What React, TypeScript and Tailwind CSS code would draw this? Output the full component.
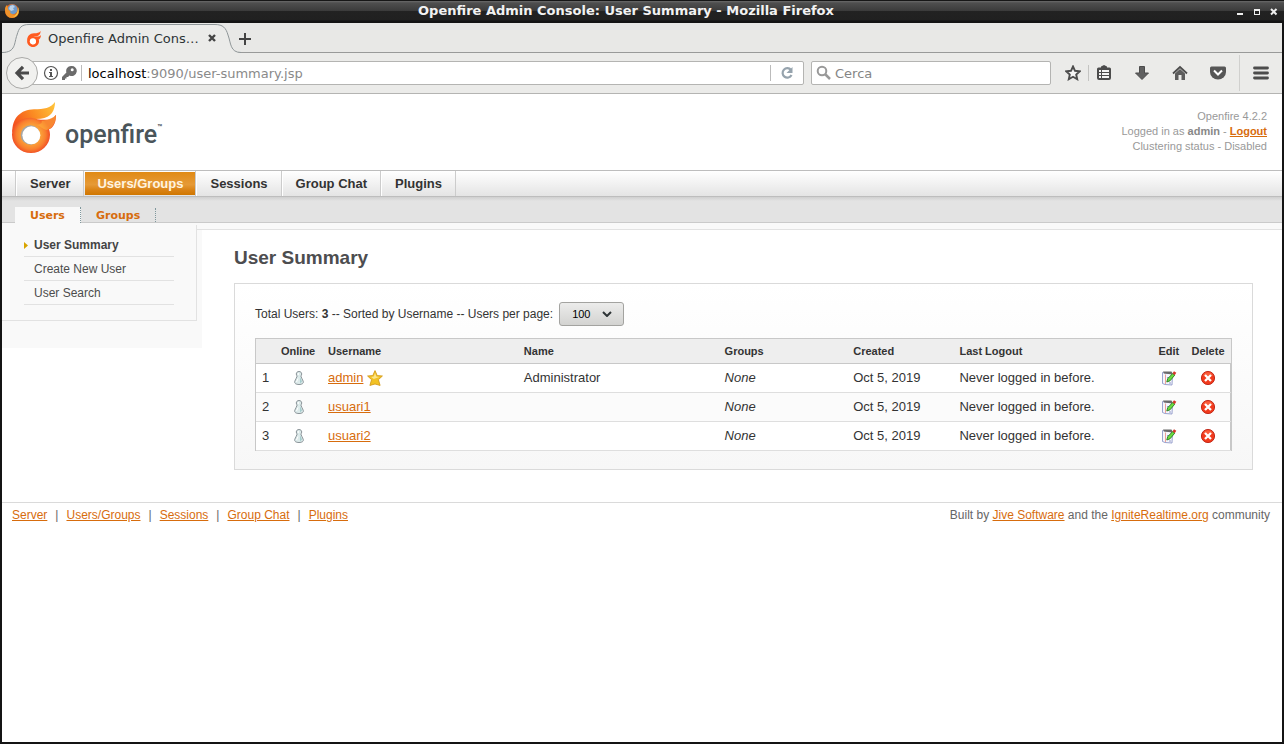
import React from "react";

const navItems = ["Server", "Users/Groups", "Sessions", "Group Chat", "Plugins"];

const users = [
  { id: 1, username: "admin", name: "Administrator", isAdmin: true },
  { id: 2, username: "usuari1", name: "", isAdmin: false },
  { id: 3, username: "usuari2", name: "", isAdmin: false },
];

const linkClass = "text-[#d76c0d] underline";

function FlameLogo({ className, flat = false }: { className: string; flat?: boolean }) {
  const id = flat ? "flat" : "full";
  const body = flat ? "#ff5a1f" : `url(#${id}-ring)`;
  const flame = flat ? "#ff5a1f" : `url(#${id}-flame)`;
  return (
    <svg viewBox="0 0 132 153" className={className} aria-hidden="true">
      <defs>
        <radialGradient id={`${id}-ring`} cx="57" cy="98" r="58" gradientUnits="userSpaceOnUse">
          <stop offset="0.45" stopColor="#fba63a" />
          <stop offset="0.75" stopColor="#f9812f" />
          <stop offset="1" stopColor="#f04a23" />
        </radialGradient>
        <linearGradient id={`${id}-flame`} x1="0" y1="0.6" x2="1" y2="0.2">
          <stop offset="0" stopColor="#f4511e" />
          <stop offset="0.5" stopColor="#fb8c23" />
          <stop offset="1" stopColor="#ffc038" />
        </linearGradient>
      </defs>
      <path d="M1 92C0 48 26 23 66 22C96 22 116 18 129 0C129 24 119 47 86 50C42 50 14 60 1 92Z" fill={flame} />
      <path d="M0 98C0 66 25 47 57 47C84 54 116 60 132 38C133 62 122 78 111 82C113 88 114 93 114 98C114 129 88 153 57 153C26 153 0 129 0 98Z" fill={body} />
      {!flat && <path d="M88 56C108 54 122 49 132 39C132 62 121 80 104 84C94 82 89 74 72 68C86 68 92 62 88 56Z" fill="#fdb03a" opacity="0.6" />}
      <circle cx="55" cy="99" r="29" fill={flat ? "#fff" : "#a5a5a5"} />
      <circle cx="58" cy="100" r="27" fill="#fff" />
    </svg>
  );
}

function FirefoxIcon() {
  return (
    <svg viewBox="0 0 16 16" className="size-4" aria-hidden="true">
      <circle cx="8" cy="8" r="7" fill="#e0641a" />
      <circle cx="8.5" cy="6.5" r="5" fill="#6f9bcb" />
      <path d="M6 3l3-1 2 2-2 1 1 2-3 1-2-2z" fill="#bcd3ea" />
      <path d="M1 6C1 12 4 15 8 15C13 15 15 11 15 7C14 11 11 12.500 8 11C6 10 5 9 7 8C4 8 4 5 3 2C2 3 1 4 1 6Z" fill="#f0932b" />
      <path d="M14 4C16 9 13 14 9 14C13 12 14 8 14 4Z" fill="#f8d24a" />
    </svg>
  );
}

function TitleBar() {
  return (
    <header className="grid h-[23px] grid-cols-[32px_1fr_64px] items-center border-t border-[#161616] bg-[linear-gradient(to_bottom,#6a6a6a_0,#4e4e4e_2px,#3a3a3a_10px,#222_10px,#202020_19px,#141414_20px)] px-1 pb-[2px] text-[#f2f2f2]">
      <FirefoxIcon />
      <h1 className="text-center font-['DejaVu_Sans',sans-serif] text-[13px] leading-5 font-bold whitespace-nowrap">
        Openfire Admin Console: User Summary - Mozilla Firefox
      </h1>
      <div className="flex justify-end gap-2 pr-[2px]">
        <button aria-label="Minimize" className="flex size-[9px]">
          <svg viewBox="0 0 9 9" className="size-[9px]"><path d="M2 6h6v2H2z" fill="#eee" /></svg>
        </button>
        <button aria-label="Maximize" className="flex size-[9px]">
          <svg viewBox="0 0 9 9" className="size-[9px]"><path d="M2 2h6v6H2zM3 4v3h4V4z" fill="#eee" fillRule="evenodd" /></svg>
        </button>
        <button aria-label="Close" className="flex size-[9px]">
          <svg viewBox="0 0 9 9" className="size-[9px]"><path d="M2 2l5.500 5.500M7.500 2L2 7.500" stroke="#eee" strokeWidth="2" /></svg>
        </button>
      </div>
    </header>
  );
}

function TabStrip() {
  return (
    <div className="flex h-[30px] items-start border-b border-[#999a99] bg-[#e8e8e6] text-[#2e3436]">
      <div className="relative flex h-[30px] w-[236px] items-center pr-[22px] pl-6">
        <svg viewBox="0 0 240 30" className="absolute top-0 left-0 h-[30px] w-[240px]" aria-hidden="true">
          <path d="M0 29.500C14 29.500 12 20 15 12C17 5 19 1.500 27 1.500H213C221 1.500 224 5 226 12C229 20 228 29.500 239 29.500V31H0Z" fill="#ebebe9" />
          <path d="M0 29.500C14 29.500 12 20 15 12C17 5 19 1.500 27 1.500H213C221 1.500 224 5 226 12C229 20 228 29.500 239 29.500" fill="none" stroke="#8f9698" />
        </svg>
        <FlameLogo flat className="relative mt-[2px] size-4" />
        <span className="relative ml-[6px] flex-1 pt-px text-[13px] whitespace-nowrap">Openfire Admin Cons…</span>
        <button aria-label="Close tab" className="relative flex">
          <svg viewBox="0 0 8 8" className="size-2"><path d="M1 1l6 6M7 1L1 7" stroke="#444" strokeWidth="2.400" /></svg>
        </button>
      </div>
      <button aria-label="New tab" className="relative flex h-[30px] items-center pt-[2px]">
        <svg viewBox="0 0 14 14" className="size-[14px]"><path d="M7 1v12M1 7h12" stroke="#444" strokeWidth="2" /></svg>
      </button>
    </div>
  );
}

function Toolbar() {
  return (
    <div className="flex h-[41px] items-center border-b border-[#b4b4b2] bg-[#ebebe9] pl-1 text-[13px]">
      <button aria-label="Back" className="z-10 flex size-8 shrink-0 items-center justify-center rounded-full border border-[#a9a9a7] bg-[#f1f1ef]">
        <svg viewBox="0 0 16 16" className="size-4"><path d="M9 1.800L3 8l6 6.200M3.500 8H15" fill="none" stroke="#4a4a4a" strokeWidth="3.200" /></svg>
      </button>
      <div className="-ml-2 flex h-6 flex-1 items-center rounded-r-[2px] border border-[#b4b4b2] bg-white pl-3">
        <svg viewBox="0 0 16 16" className="size-4 shrink-0" aria-hidden="true">
          <circle cx="8" cy="8" r="6.500" fill="none" stroke="#555" strokeWidth="1.200" />
          <path d="M7 4h2v2H7zM6 7h3v4h1v1H6v-1h1V8H6z" fill="#555" />
        </svg>
        <svg viewBox="0 0 16 16" className="ml-[2px] size-4 shrink-0" aria-hidden="true">
          <path d="M10 1a5 5 0 0 0-4.600 6.500L1 12v3h3v-1.500h1.500V12H7l1.500-1.600A5 5 0 1 0 10 1zM11.200 3.300a1.500 1.500 0 1 1 0 3a1.500 1.500 0 0 1 0-3z" fill="#6b6b6b" />
        </svg>
        <span className="ml-1 h-4 w-px bg-[#bbb]" />
        <label className="relative ml-[6px] flex h-full flex-1 items-center pt-px">
          <span aria-hidden="true" className="text-[#8a8a8a]"><span className="text-black">localhost</span>:9090/user-summary.jsp</span>
          <input aria-label="Address" className="absolute inset-0 w-full bg-transparent outline-none" />
        </label>
        <button aria-label="Reload" className="flex h-4 items-center border-l border-[#bbb] px-2">
          <svg viewBox="0 0 16 16" className="size-4"><path d="M12 5A4.700 4.700 0 1 0 12.500 10" fill="none" stroke="#96a3ad" strokeWidth="2.200" /><path d="M13.500 2v6h-6z" fill="#96a3ad" /></svg>
        </button>
      </div>
      <label className="ml-[7px] flex h-6 w-60 items-center rounded-[2px] border border-[#b4b4b2] bg-white px-1">
        <svg viewBox="0 0 16 16" className="size-4 shrink-0" aria-hidden="true"><circle cx="6" cy="6" r="4.300" fill="none" stroke="#999" strokeWidth="2" /><path d="M9 9l5 5" stroke="#999" strokeWidth="2.500" /></svg>
        <input aria-label="Search" placeholder="Cerca" className="ml-[3px] w-full min-w-0 pt-px outline-none placeholder:text-[#858585]" />
      </label>
      <div className="flex items-center pl-[14px]">
        <button aria-label="Bookmark" className="flex">
          <svg viewBox="0 0 16 16" className="size-4"><path d="M8 1.500l2 4.300 4.700.5-3.500 3.200 1 4.700L8 11.800l-4.200 2.400 1-4.700L1.300 6.300 6 5.800z" fill="#f5f5f5" stroke="#4c4c4c" strokeWidth="1.900" /></svg>
        </button>
        <span className="ml-[7px] h-4 w-px bg-[#c4c4c2]" />
        <button aria-label="Bookmarks list" className="ml-[7px] flex">
          <svg viewBox="0 0 16 16" className="size-4"><path d="M1 4q0-1.500 1.500-1.500H5V1.500L8 0l3 1.500v1h2.500Q15 2.500 15 4v9q0 2-2 2H3q-2 0-2-2z" fill="#4c4c4c" /><path d="M3 5h2v2H3zM6 5h7v2H6zM3 8h2v2H3zM6 8h7v2H6zM3 11h2v2H3zM6 11h7v2H6z" fill="#f4f4f4" /></svg>
        </button>
        <button aria-label="Downloads" className="ml-[22px] flex">
          <svg viewBox="0 0 16 16" className="size-4"><path d="M5.500 1.500h5V8H14.500L8 14.500 1.500 8H5.500z" fill="#606060" stroke="#4c4c4c" /></svg>
        </button>
        <button aria-label="Home" className="ml-[22px] flex">
          <svg viewBox="0 0 16 16" className="size-4"><path d="M3 8.500l5-4.500 5 4.500V15H9.500v-5h-3v5H3z" fill="#5c5c5c" /><path d="M1 8.500L8 2l7 6.500" fill="none" stroke="#4c4c4c" strokeWidth="1.800" /></svg>
        </button>
        <button aria-label="Pocket" className="ml-[22px] flex">
          <svg viewBox="0 0 16 16" className="size-4"><path d="M0 3q0-1.500 1.500-1.500h13Q16 1.500 16 3v4a8 7.500 0 0 1-16 0z" fill="#565656" /><path d="M4 5.500l4 4 4-4" fill="none" stroke="#fff" strokeWidth="2" /></svg>
        </button>
        <span className="ml-[13px] h-9 w-px bg-[#d0d0ce]" />
        <button aria-label="Menu" className="mr-[13px] ml-[13px] flex">
          <svg viewBox="0 0 16 16" className="size-4"><path d="M1.500 3h13M1.500 8h13M1.500 13h13" stroke="#4c4c4c" strokeWidth="2.800" strokeLinecap="round" /></svg>
        </button>
      </div>
    </div>
  );
}

function SiteHeader() {
  return (
    <>
      <div className="flex h-[76px] items-start justify-between pt-2 pr-[15px] pl-[10px]">
        <a href="#home" aria-label="Openfire" className="flex items-start">
          <FlameLogo className="h-[51px] w-11" />
          <span className="mt-[17px] ml-[9px] font-['Roboto',sans-serif] text-[25px] leading-8 font-medium text-[#4a555a]">openfire</span>
          <span className="mt-5 font-['Roboto',sans-serif] text-[8px] font-bold text-[#4a555a]">™</span>
        </a>
        <div className="pt-[7px] text-right text-[11px] leading-[15px] text-[#999]">
          <p>Openfire 4.2.2</p>
          <p>Logged in as <b className="text-[#888]">admin</b> - <a href="#logout" className="font-bold text-[#d76c0d] underline">Logout</a></p>
          <p>Clustering status - Disabled</p>
        </div>
      </div>
      <nav className="flex h-[27px] border-y border-[#bdbdbd] bg-linear-to-b from-white to-[#e4e4e4] pl-[13px] text-[13px] leading-[26px] font-bold text-[#333]">
        {navItems.map((item) => (
          <a key={item} href={`#${item}`} className="flex border-l border-[#ccc]">
            <span
              className={
                item === "Users/Groups"
                  ? "my-px ml-px bg-[linear-gradient(#e08a15,#e69a37_55%,#d98112_80%,#cf7600)] px-3 leading-6 text-[#fff4e0]"
                  : "h-[25px] border-l border-white px-[13px]"
              }
            >
              {item}
            </span>
          </a>
        ))}
        <span className="border-l border-[#ccc]" />
      </nav>
      <nav className="flex h-[26px] items-end border-b border-[#cacaca] bg-[linear-gradient(#cfcfcf,#e3e3e3_4px)] pl-[13px] font-['DejaVu_Sans',sans-serif] text-[11px] font-bold text-[#d76c0d]">
        <a href="#users" className="-mb-px h-4 border-r border-dotted border-[#7f979c] bg-[#f9f9f9] px-[15px] leading-[18px]">Users</a>
        <a href="#groups" className="h-[14px] border-r border-dotted border-[#7f979c] px-[15px] leading-4">Groups</a>
      </nav>
    </>
  );
}

function Sidebar() {
  const items = ["User Summary", "Create New User", "User Search"];
  return (
    <aside className="h-[118px] w-[200px] shrink-0 bg-[#f9f9f9]">
      <ul className="w-[195px] border-r border-b border-[#e2e2e2] px-[22px] pt-[3px] pb-[15px] text-xs text-[#4c4c4c]">
        {items.map((item, index) => (
          <li key={item} className="flex h-6 items-center border-b border-[#e2e2e2]">
            <svg viewBox="0 0 4 7" className="mt-[2px] mr-[6px] h-[7px] w-1" aria-hidden="true">
              {index === 0 && <path d="M0 0l4 3.500L0 7z" fill="#d8a400" />}
            </svg>
            <a href={`#${item}`} className={index === 0 ? "font-bold text-[#444]" : ""}>{item}</a>
          </li>
        ))}
      </ul>
    </aside>
  );
}

function PawnIcon() {
  return (
    <svg viewBox="0 0 16 16" className="mx-auto size-4" aria-label="Offline" role="img">
      <path d="M8 1.500c1.700 0 2.700 1.100 2.700 2.500 0 1-.4 1.500-.9 2 .8 2 1.600 3.500 2.400 5.200C13 13.300 11 14.500 8 14.500s-5-1.200-4.200-3.300C4.600 9.500 5.400 8 6.200 6c-.5-.5-.9-1-.9-2C5.300 2.600 6.300 1.500 8 1.500z" fill="#dceaea" stroke="#8b9499" />
      <path d="M9 7l2 4.500L9 13.500z" fill="#a5cccd" />
      <path d="M7.300 3v2M7 8.500l-1.500 3.500" stroke="#fff" />
    </svg>
  );
}

function StarIcon() {
  return (
    <svg viewBox="0 0 16 16" className="size-4" aria-label="Administrator" role="img">
      <path d="M8 .6l2.200 5 5.200.4-4 3.700 1.700 5.700-5.100-1.400-5.100 1.400 1.700-5.700L.6 6l5.200-.4z" fill="#f2c224" stroke="#d59b1c" strokeWidth="0.900" strokeLinejoin="round" />
      <path d="M8 3l1.300 3.500 3 .5-5.500 2-2.700-2 2.700-.5z" fill="#fbe58a" />
    </svg>
  );
}

function EditIcon() {
  return (
    <svg viewBox="0 0 16 16" className="size-4" aria-hidden="true">
      <path d="M1.500 2.500l10 1.500-.5 11-7-.5-2.500-1z" fill="#f5f6fc" stroke="#8f97c8" strokeWidth="0.900" />
      <path d="M2 1.500h8.500l1.500 3-9-1z" fill="#6a6a6a" />
      <path d="M4.500 4.500v9.500" stroke="#ee8c7c" strokeWidth="0.800" />
      <path d="M6 7.500h2M8 13h2" stroke="#7c86be" strokeWidth="0.800" />
      <path d="M11.700 3.500l2 1.700-4.700 5.600-3.200 1.200.9-3.300z" fill="#6bdc3f" stroke="#267a1d" strokeWidth="0.900" />
      <path d="M11.500 3.300l1.500-2.100 2.300 1.600-1.600 2.500z" fill="#d6372a" />
    </svg>
  );
}

function DeleteIcon() {
  return (
    <svg viewBox="0 0 16 16" className="size-4" aria-hidden="true">
      <circle cx="8" cy="8" r="6.600" fill="#f13a1c" stroke="#bd2011" strokeWidth="0.900" />
      <path d="M3 5.500a5.400 5.400 0 0 1 10 0q-5 2-10 0z" fill="#ff7a55" opacity="0.550" />
      <path d="M5 5l6 6M11 5l-6 6" stroke="#fff" strokeWidth="2.300" />
    </svg>
  );
}

function UserTable() {
  return (
    <div className="mt-3 border border-b-0 border-[#c8c8c8]">
      <table className="w-full table-fixed text-left text-[13px] text-[#333] [&_td]:px-[6px] [&_th]:px-[6px]">
        <colgroup>
          <col className="w-[19px]" />
          <col className="w-[47px]" />
          <col className="w-[20.1%]" />
          <col className="w-[20.6%]" />
          <col className="w-[13.2%]" />
          <col className="w-[10.9%]" />
          <col />
          <col className="w-[33px]" />
          <col className="w-[45px]" />
        </colgroup>
        <thead className="bg-[#eee] text-[11px] whitespace-nowrap">
          <tr className="h-6 border-b border-[#c8c8c8]">
            <th aria-label="Number" />
            <th>Online</th>
            <th>Username</th>
            <th>Name</th>
            <th>Groups</th>
            <th>Created</th>
            <th>Last Logout</th>
            <th>Edit</th>
            <th>Delete</th>
          </tr>
        </thead>
        <tbody>
          {users.map((user) => (
            <tr key={user.id} className="h-[29px] border-r border-b border-r-[#c8c8c8] border-b-[#dedede] bg-white even:bg-[#fbfbfb]">
              <td>{user.id}</td>
              <td><PawnIcon /></td>
              <td>
                <span className="flex items-center gap-1">
                  <a href={`#${user.username}`} className={linkClass}>{user.username}</a>
                  {user.isAdmin && <StarIcon />}
                </span>
              </td>
              <td>{user.name}</td>
              <td><em>None</em></td>
              <td>Oct 5, 2019</td>
              <td>Never logged in before.</td>
              <td><button aria-label={`Edit ${user.username}`} className="mx-auto flex w-4"><EditIcon /></button></td>
              <td><button aria-label={`Delete ${user.username}`} className="mx-auto flex w-4"><DeleteIcon /></button></td>
            </tr>
          ))}
        </tbody>
      </table>
    </div>
  );
}

function Summary() {
  return (
    <main className="min-w-0 flex-1 pr-[29px] pl-8">
      <h2 className="pt-4 text-[19px] leading-6 font-bold text-[#4d4d4f]">User Summary</h2>
      <section className="mt-[13px] border border-[#dadada] bg-linear-to-b from-white to-[#f7f7f7] px-5 pt-[18px] pb-[18px]">
        <div className="flex items-center text-xs text-[#333]">
          <label htmlFor="per-page">Total Users: <b>3</b> -- Sorted by Username -- Users per page:</label>
          <span className="relative ml-[6px] flex">
            <select id="per-page" defaultValue="100" className="h-6 w-[65px] appearance-none rounded-[3px] border border-[#a3a3a0] bg-linear-to-b from-[#ececeb] to-[#d3d3d1] pl-3 text-[11px] text-black">
              <option>25</option>
              <option>50</option>
              <option>100</option>
            </select>
            <svg viewBox="0 0 10 6" className="pointer-events-none absolute top-[9px] right-3 h-[6px] w-[10px]" aria-hidden="true"><path d="M1 1l4 4 4-4" fill="none" stroke="#2e3436" strokeWidth="2" /></svg>
          </span>
        </div>
        <UserTable />
      </section>
    </main>
  );
}

function Footer() {
  return (
    <footer className="mt-8 flex justify-between border-t border-[#dadada] pt-1 pr-3 pl-[10px] text-xs leading-4 text-[#666]">
      <nav className="flex">
        {navItems.map((item, index) => (
          <span key={item}>
            {index > 0 && <span className="px-2">|</span>}
            <a href={`#${item}`} className={linkClass}>{item}</a>
          </span>
        ))}
      </nav>
      <p>
        Built by <a href="#jive" className={linkClass}>Jive Software</a> and the <a href="#ignite" className={linkClass}>IgniteRealtime.org</a> community
      </p>
    </footer>
  );
}

export default function App() {
  return (
    <div className="flex min-h-screen flex-col bg-[#141414]">
      <TitleBar />
      <div className="mx-[2px] mb-[2px] flex flex-1 flex-col bg-white">
        <div className="font-['DejaVu_Sans',sans-serif]">
          <TabStrip />
          <Toolbar />
        </div>
        <div className="font-['Liberation_Sans',sans-serif]">
          <SiteHeader />
          <div className="flex h-[7px] bg-[#f9f9f9]">
            <span className="mt-[2px] w-[195px] border-r border-[#e2e2e2]" />
            <span className="flex-1 rounded-tl-[4px] border-b border-[#e2e2e2]" />
          </div>
          <div className="flex">
            <Sidebar />
            <Summary />
          </div>
          <Footer />
        </div>
      </div>
    </div>
  );
}
